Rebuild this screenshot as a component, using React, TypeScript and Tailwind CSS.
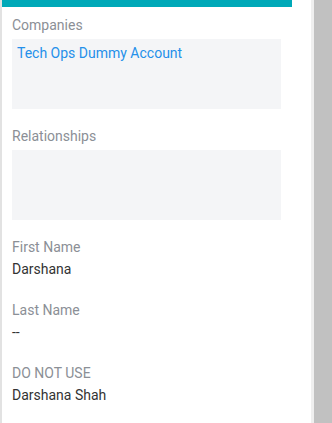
const fields = [
  { label: "First Name", value: "Darshana" },
  { label: "Last Name", value: "--" },
  { label: "DO NOT USE", value: "Darshana Shah" },
];

export default function App() {
  return (
    <div className="flex h-[423px] w-[332px] overflow-hidden bg-white font-['Roboto',sans-serif] text-[14px]">
      <div className="h-full w-[311px] border-l-2 border-l-[#e2e2e2]">
        <div className="h-[7px] w-[290px] bg-[#00a9b8]" />
        <div className="pl-[10px] pt-[8px]">
          <p className="leading-5 text-[#8b8f96]">Companies</p>
          <div className="mt-[4px] h-[70px] w-[269px] bg-[#f4f5f7] pl-[5px] pt-[4px]">
            <a className="leading-5 text-[#2490ea]">Tech Ops Dummy Account</a>
          </div>
          <p className="mt-[17px] leading-5 text-[#8b8f96]">Relationships</p>
          <div className="mt-[4px] h-[70px] w-[269px] bg-[#f4f5f7]" />
          <div className="mt-[17px] flex flex-col gap-[21px]">
            {fields.map((f) => (
              <div key={f.label}>
                <p className="leading-5 text-[#8b8f96]">{f.label}</p>
                <p className="mt-[2px] leading-5 text-[#333333]">{f.value}</p>
              </div>
            ))}
          </div>
        </div>
      </div>
      <div className="h-full w-[3px] bg-[#efefef]" />
      <div className="h-full flex-1 bg-[#c1c1c1]" />
    </div>
  );
}
